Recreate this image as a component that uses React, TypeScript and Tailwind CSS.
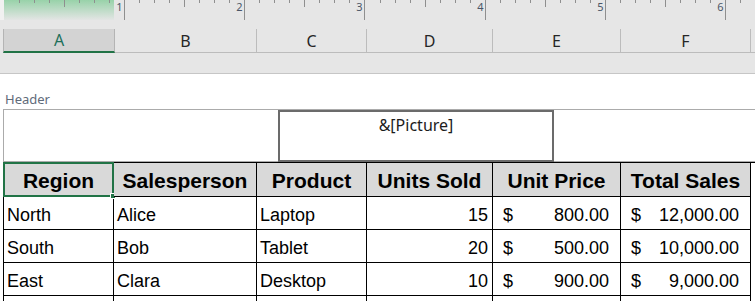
import React from 'react';

const colWidths = [112, 142, 110, 126, 128, 130];
const letters = ['A', 'B', 'C', 'D', 'E', 'F'];
const cellWidths = [110, 143, 110, 126, 128, 130];

const rows = [
  { region: 'North', person: 'Alice', product: 'Laptop', units: '15', price: '800.00', total: '12,000.00' },
  { region: 'South', person: 'Bob', product: 'Tablet', units: '20', price: '500.00', total: '10,000.00' },
  { region: 'East', person: 'Clara', product: 'Desktop', units: '10', price: '900.00', total: '9,000.00' },
];

const Ruler: React.FC = () => {
  const ticks: React.ReactNode[] = [];
  for (let k = -8; k <= 42; k++) {
    const x = Math.round(124 + k * 15.03) + 0.5;
    if (x < 5 || x > 755) continue;
    const inch = k % 8 === 0;
    const half = !inch && k % 4 === 0;
    const h = inch ? 20 : half ? 7 : 3;
    ticks.push(<line key={`t${k}`} x1={x} x2={x} y1={0} y2={h} stroke="#8f8f8f" strokeWidth={1} />);
    if (inch && k >= 0) {
      ticks.push(
        <text key={`n${k}`} x={x - 2} y={11} textAnchor="end" fontSize={11} fill="#4b5668" fontFamily="'Noto Sans', sans-serif">
          {k / 8 + 1}
        </text>
      );
    }
  }
  return (
    <svg width={755} height={21} className="block">
      <defs>
        <linearGradient id="margin" x1="0" y1="0" x2="0" y2="1">
          <stop offset="0" stopColor="#98d2a9" />
          <stop offset="1" stopColor="#e3e5e4" />
        </linearGradient>
      </defs>
      <rect x={0} y={0} width={4} height={20} fill="#f1f1f1" />
      <rect x={4} y={0} width={110} height={20} fill="url(#margin)" />
      {ticks}
    </svg>
  );
};

export default function App() {
  return (
    <div className="w-[755px] h-[301px] overflow-hidden bg-white relative">
      {/* ruler + column headers */}
      <div className="bg-[#e6e6e6] h-[74px] border-b border-[#c6c6c6]">
        <Ruler />
        <div className="h-[8px]" />
        <div className="flex h-[24px] pl-[3px] font-['Noto_Sans',sans-serif] text-[16px]">
          {letters.map((l, i) => (
            <div
              key={l}
              style={{ width: colWidths[i] }}
              className={
                i === 0
                  ? 'flex items-center justify-center bg-[#d3d3d3] border-l border-r border-[#b4b4b4] border-b-2 border-b-[#217346] text-[#1d6f5a]'
                  : 'flex items-center justify-center border-r border-b border-[#bcbcbc] text-[#262626]'
              }
            >
              {l}
            </div>
          ))}
          <div className="flex-1 border-b border-[#bcbcbc]" />
        </div>
      </div>

      {/* page header label */}
      <div className="pt-[17px] px-[5px] h-[35px] font-['Noto_Sans',sans-serif] text-[13px] leading-[16px] text-[#5f6b7a]">
        Header
      </div>

      {/* header box */}
      <div className="ml-[3px] h-[53px] flex border-t border-b border-l border-[#ababab]">
        <div className="w-[274px]" />
        <div className="w-[276px] border-2 border-[#6b6b6b] flex justify-center pt-[3px] -mb-px font-['Noto_Sans',sans-serif] text-[16px] leading-[20px] text-[#1c1c1c]">
          <span>&amp;[Picture]</span>
        </div>
        <div className="flex-1" />
      </div>

      {/* table */}
      <div className="ml-[3px] font-['Liberation_Sans',Arial,sans-serif] text-black">
        <div className="flex border-t border-l border-black">
          {['Region', 'Salesperson', 'Product', 'Units Sold', 'Unit Price', 'Total Sales'].map((h, i) => (
            <div
              key={h}
              style={{ width: cellWidths[i] }}
              className="relative h-[34px] bg-[#d9d9d9] border-r border-b border-black flex items-center justify-center pt-[2px] text-[21px] font-bold leading-[24px]"
            >
              {h}
              {i === 0 && (
                <>
                  <div className="absolute -left-px -top-px -right-px -bottom-px border-2 border-[#217346]" />
                  <div className="absolute -right-[3px] -bottom-[3px] w-[6px] h-[6px] bg-[#217346] border border-white" />
                </>
              )}
            </div>
          ))}
        </div>
        {rows.map((r) => (
          <div key={r.region} className="flex border-l border-black text-[18px] leading-[22px]">
            <div style={{ width: cellWidths[0] }} className="h-[33px] border-r border-b border-black flex items-center pt-[3px] pl-[3px]">{r.region}</div>
            <div style={{ width: cellWidths[1] }} className="h-[33px] border-r border-b border-black flex items-center pt-[3px] pl-[3px]">{r.person}</div>
            <div style={{ width: cellWidths[2] }} className="h-[33px] border-r border-b border-black flex items-center pt-[3px] pl-[3px]">{r.product}</div>
            <div style={{ width: cellWidths[3] }} className="h-[33px] border-r border-b border-black flex items-center justify-end pt-[3px] pr-[4px]">{r.units}</div>
            <div style={{ width: cellWidths[4] }} className="h-[33px] border-r border-b border-black flex items-center justify-between pt-[3px] pl-[10px] pr-[11px]">
              <span>$</span>
              <span>{r.price}</span>
            </div>
            <div style={{ width: cellWidths[5] }} className="h-[33px] border-r border-b border-black flex items-center justify-between pt-[3px] pl-[10px] pr-[11px]">
              <span>$</span>
              <span>{r.total}</span>
            </div>
          </div>
        ))}
        <div className="flex border-l border-black">
          {cellWidths.map((w, i) => (
            <div key={i} style={{ width: w }} className="h-[33px] border-r border-black" />
          ))}
        </div>
      </div>
    </div>
  );
}
